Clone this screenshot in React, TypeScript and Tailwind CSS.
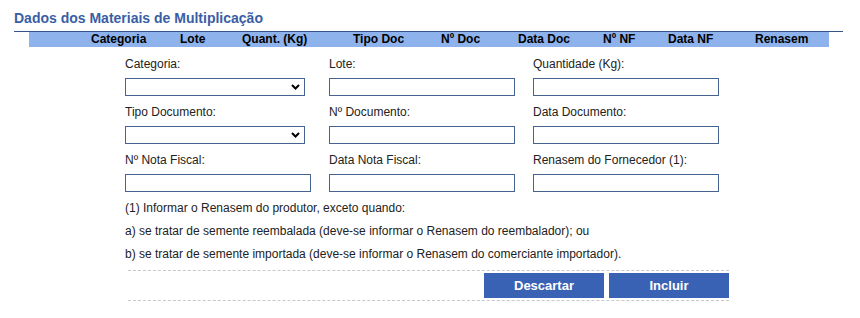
const font = { fontFamily: '"Liberation Sans", Arial, sans-serif' };

const headers = [
    { label: 'Categoria', w: 'w-[89px]' },
    { label: 'Lote', w: 'w-[62px]' },
    { label: 'Quant. (Kg)', w: 'w-[111px]' },
    { label: 'Tipo Doc', w: 'w-[88px]' },
    { label: 'Nº Doc', w: 'w-[77px]' },
    { label: 'Data Doc', w: 'w-[85px]' },
    { label: 'Nº NF', w: 'w-[65px]' },
    { label: 'Data NF', w: 'w-[87px]' },
    { label: 'Renasem', w: 'w-[70px]' },
];

const SelectBox = () => (
    <div className="w-[180px] h-[18px] border border-[#44648f] bg-white flex items-center justify-end pr-[4px]">
        <svg width="9" height="6" viewBox="0 0 9 6">
            <polyline points="1,1 4.5,4.5 8,1" fill="none" stroke="#000" strokeWidth="2" />
        </svg>
    </div>
);

const TextBox = () => (
    <input type="text" className="block w-[186px] h-[18px] border border-[#44648f] bg-white outline-none" />
);

const Field = ({ label, select }: { label: string; select?: boolean }) => (
    <div className="pb-[9px]">
        <p className="leading-[14px] mb-[7px]">{label}</p>
        {select ? <SelectBox /> : <TextBox />}
    </div>
);

/** Dados dos Materiais de Multiplicação */
const App = () => {
    return (
        <div className="w-[860px] h-[318px] bg-white text-[12px] text-[#222]" style={font}>
            <div className="ml-[14px] w-[829px]">
                <h2 className="pt-[10px] pb-[5px] leading-[16px] text-[14px] font-bold text-[#3a5ea4] border-b border-[#35558a]">
                    Dados dos Materiais de Multiplicação
                </h2>
                <div className="ml-[15px] w-[800px] h-[15px] bg-[#8db2ec] flex font-bold text-black leading-[15px] pl-[62px]">
                    {headers.map(h => (
                        <div key={h.label} className={`${h.w} shrink-0`}>{h.label}</div>
                    ))}
                </div>
            </div>
            <div className="ml-[125px] mt-[10px] w-[612px]">
                <div className="grid grid-cols-[204px_204px_204px]">
                    <Field label="Categoria:" select />
                    <Field label="Lote:" />
                    <Field label="Quantidade (Kg):" />
                    <Field label="Tipo Documento:" select />
                    <Field label="Nº Documento:" />
                    <Field label="Data Documento:" />
                    <Field label="Nº Nota Fiscal:" />
                    <Field label="Data Nota Fiscal:" />
                    <Field label="Renasem do Fornecedor (1):" />
                </div>
                <p className="leading-[14px] mb-[9px]">(1) Informar o Renasem do produtor, exceto quando:</p>
                <p className="leading-[14px] mb-[9px]">a) se tratar de semente reembalada (deve-se informar o Renasem do reembalador); ou</p>
                <p className="leading-[14px] mb-[9px]">b) se tratar de semente importada (deve-se informar o Renasem do comerciante importador).</p>
                <div className="ml-[3px] w-[601px] border-y border-dashed border-[#c8c8c8] py-[2px] flex justify-end gap-[5px]">
                    <button className="w-[120px] h-[25px] bg-[#3a62b4] text-white font-bold text-[13px]">Descartar</button>
                    <button className="w-[120px] h-[25px] bg-[#3a62b4] text-white font-bold text-[13px]">Incluir</button>
                </div>
            </div>
        </div>
    );
};

export default App;
